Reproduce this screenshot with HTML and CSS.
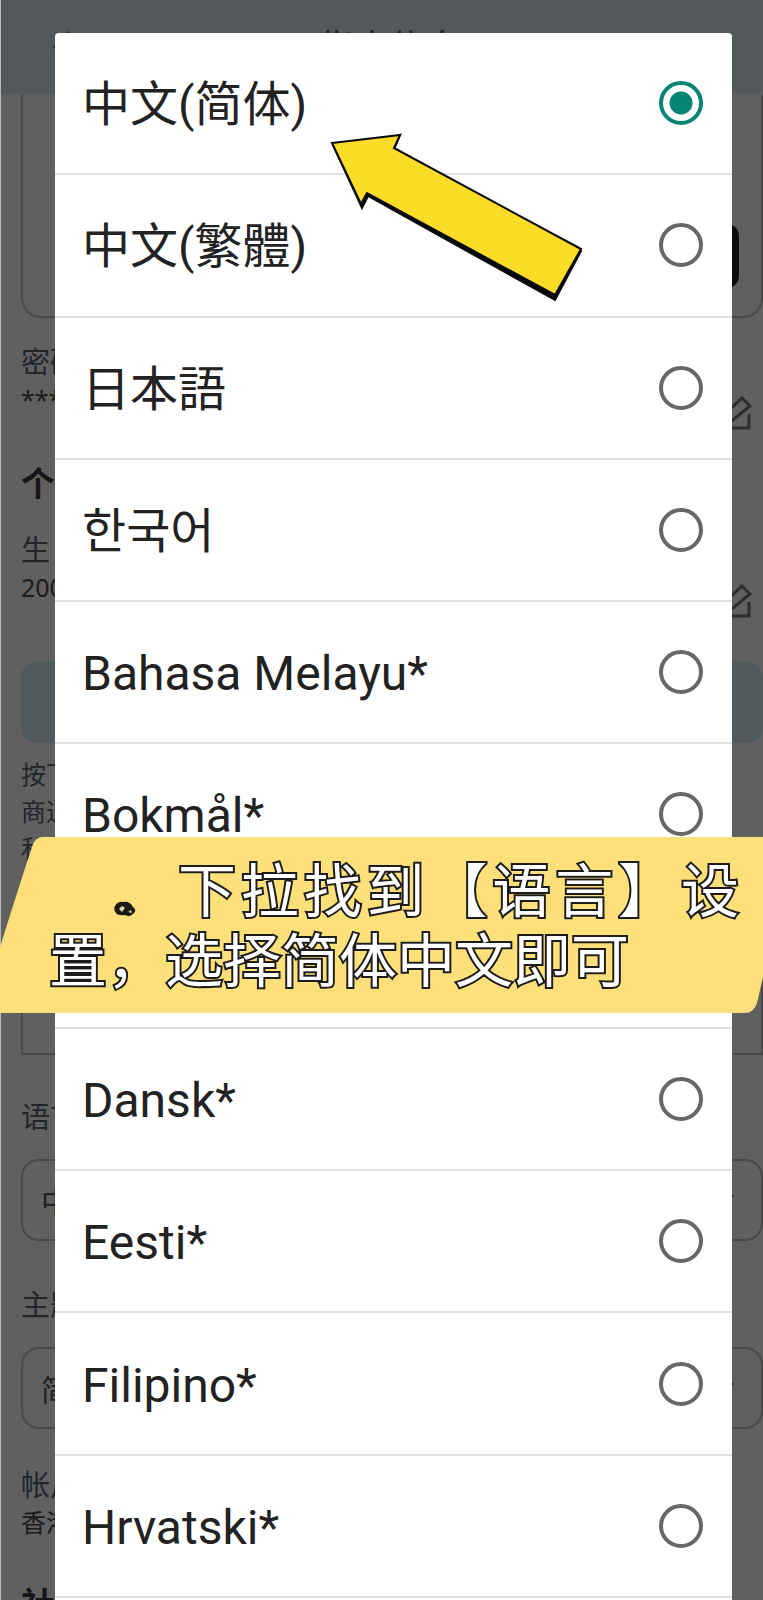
FILE: index.html
```html
<!DOCTYPE html>
<html lang="zh-CN">
<head>
<meta charset="utf-8">
<meta name="viewport" content="width=device-width, initial-scale=1">
<title>语言</title>
<link rel="stylesheet" href="styles.css">
</head>
<body>
<div class="page">
  <header class="topbar">
    <svg class="back" viewBox="0 0 20 36"><path d="M18 3 4 18l14 15"/></svg>
    <h1 class="topbar-title">指定信息</h1>
  </header>
  <main class="settings">
    <section class="card"><span class="card-button"></span></section>
    <section class="field">
      <div><div class="label">密码</div><div class="value">****</div></div>
      <svg class="edit" viewBox="0 0 34 34"><path d="M24 2 32 10 15 24H7v-6zM31 18v14H2V4h12"/></svg>
    </section>
    <h2 class="heading">个</h2>
    <section class="field">
      <div><div class="label">生</div><div class="value">200</div></div>
      <svg class="edit" viewBox="0 0 34 34"><path d="M24 2 32 10 15 24H7v-6zM31 18v14H2V4h12"/></svg>
    </section>
    <div class="save"></div>
    <p class="note">按下<br>商通<br>私</p>
    <div class="panel"></div>
    <div class="label">语言</div>
    <div class="picker"><span>中</span><svg class="chevron" viewBox="0 0 24 14"><path d="M2 2l10 10L22 2"/></svg></div>
    <div class="label label-theme">主题</div>
    <div class="picker"><span>简</span><svg class="chevron" viewBox="0 0 24 14"><path d="M2 2l10 10L22 2"/></svg></div>
    <div class="label label-account">帐户</div>
    <div class="value">香港</div>
    <h2 class="heading heading-last">社</h2>
  </main>
</div>

<form class="dialog">
  <label class="option"><span>中文(简体)</span><input type="radio" name="lang" checked></label>
  <label class="option trad"><span lang="zh-TW">中文(繁體)</span><input type="radio" name="lang"></label>
  <label class="option"><span lang="ja">日本語</span><input type="radio" name="lang"></label>
  <label class="option"><span lang="ko">한국어</span><input type="radio" name="lang"></label>
  <label class="option"><span>Bahasa Melayu*</span><input type="radio" name="lang"></label>
  <label class="option"><span>Bokmål*</span><input type="radio" name="lang"></label>
  <div class="option"></div>
  <label class="option"><span>Dansk*</span><input type="radio" name="lang"></label>
  <label class="option"><span>Eesti*</span><input type="radio" name="lang"></label>
  <label class="option"><span>Filipino*</span><input type="radio" name="lang"></label>
  <label class="option"><span>Hrvatski*</span><input type="radio" name="lang"></label>
</form>

<svg class="arrow" viewBox="0 0 256 172">
  <path class="arrow-shade" d="M4 15 33 78 39 66 226 170 252 121 248 117 224 165 37 61zM71 5 66 17 62 15 67 6z"/>
  <path class="arrow-body" d="M3 13 71 5 65 18 252 119 226 165 38 63 32 74z"/>
</svg>

<aside class="banner">
  <svg class="banner-bg" viewBox="0 0 763 176" preserveAspectRatio="none">
    <path d="M42 0H763V140L757 166Q754 176 744 176H0V110Q22 40 32 10 35 0 42 0z"/>
  </svg>
  <svg class="speck" viewBox="0 0 24 18"><path d="M2 6Q5 1 10 2 17 1 20 7 24 10 21 13 17 18 12 15 5 16 3 13 0 9 2 6z"/><path class="speck-light" d="M6 9Q9 4 12 8L9 12zM15 12l3-2 1 3z"/></svg>
  <p class="banner-text first">下拉找到【语言】设</p>
  <p class="banner-text">置，选择简体中文即可</p>
</aside>
</body>
</html>
```
FILE: styles.css
```css
* { box-sizing: border-box; }

body {
  margin: 0;
  position: relative;
  min-height: 100vh;
  overflow-x: hidden;
  background: #606060;
  color: #222;
  font-family: Roboto, "Noto Sans CJK SC", sans-serif;
}

h1, h2, p { margin: 0; }

.page {
  height: 100vh;
  overflow: hidden;
  border-left: 1px solid #b4b8b8;
}

.topbar {
  display: flex;
  align-items: center;
  height: 94px;
  padding: 0 34px 0 50px;
  background: #53585a;
}

.topbar-title {
  flex: 1;
  padding-top: 4px;
  padding-right: 20px;
  font-size: 35px;
  font-weight: 400;
  line-height: 40px;
  text-align: center;
}

.back { width: 20px; height: 36px; }

.back path, .edit path, .chevron path {
  fill: none;
  stroke: #2c2f30;
  stroke-width: 3;
}

.settings { padding: 0 0 0 20px; }

.card {
  display: flex;
  justify-content: flex-end;
  align-items: flex-end;
  height: 224px;
  padding: 0 22px 28px 0;
  border: 2px solid #4a4a4a;
  border-top: 0;
  border-radius: 0 0 20px 20px;
}

.card-button {
  width: 120px;
  height: 64px;
  border-radius: 12px;
  background: #0b0e0f;
}

.field {
  display: flex;
  justify-content: space-between;
  align-items: flex-end;
  height: 92px;
  margin-top: 26px;
  padding-right: 11px;
}

.field > div { align-self: flex-start; }

.label {
  font-size: 29px;
  line-height: 38px;
  color: #22262b;
}

.value {
  font-family: "Noto Sans", "Noto Sans CJK SC", sans-serif;
  font-size: 25px;
  line-height: 34px;
  color: #1b1b1b;
}

.edit { width: 34px; height: 34px; margin-bottom: 6px; }

.heading {
  margin-top: 26px;
  font-size: 34px;
  line-height: 44px;
  color: #161616;
}

.save {
  height: 82px;
  margin-top: 37px;
  border-radius: 16px;
  background: #535a5e;
}

.note {
  margin-top: 14px;
  font-size: 25px;
  line-height: 37px;
  color: #22262b;
}

.panel {
  height: 120px;
  margin: 67px 0 44px;
  border: 2px solid #4a4a4a;
}

.picker {
  display: flex;
  align-items: center;
  justify-content: space-between;
  height: 82px;
  margin-top: 22px;
  padding: 0 26px 0 18px;
  border: 2px solid #4a4a4a;
  border-radius: 18px;
  font-size: 30px;
}

.chevron { width: 24px; height: 14px; }

.label-theme { margin-top: 46px; }
.label-account { margin-top: 38px; }
.heading-last { margin-top: 44px; }

.dialog {
  position: absolute;
  inset: 33px 31px 0 55px;
  display: grid;
  grid-auto-rows: 1fr;
  padding-bottom: 2px;
  border-radius: 4px 4px 0 0;
  background: #fff;
}

.option {
  display: flex;
  align-items: center;
  justify-content: space-between;
  padding: 0 29px 0 27px;
  border-bottom: 2px solid #e0e0e0;
  font-size: 48px;
  line-height: 56px;
}

.option span { padding-top: 4px; }

.trad { font-family: Roboto, "Noto Sans CJK TC", sans-serif; }

.option input {
  appearance: none;
  width: 44px;
  height: 44px;
  margin: 0;
  border: 4px solid #676767;
  border-radius: 50%;
}

.option input:checked {
  border-color: #078574;
  background: radial-gradient(circle, #078574 11px, transparent 12px);
}

.arrow {
  position: absolute;
  top: 130px;
  left: 329px;
  width: 256px;
  height: 172px;
}

.arrow-shade { fill: #0a0a0a; stroke: #0a0a0a; stroke-width: 2; }
.arrow-body { fill: #fbdc27; stroke: #0a0a0a; stroke-width: 2; }

.banner {
  position: absolute;
  top: 837px;
  left: 0;
  right: 0;
  height: 176px;
  padding: 15px 24px 0 49px;
}

.banner-bg {
  position: absolute;
  inset: 0;
  width: 100%;
  height: 100%;
  fill: #fee07a;
}

.speck {
  position: absolute;
  top: 63px;
  left: 113px;
  width: 24px;
  height: 18px;
  fill: #1c1a10;
}

.speck-light { fill: #d8d0a0; }

.banner-text {
  position: relative;
  color: #fff;
  font-family: "Noto Sans CJK SC", sans-serif;
  font-size: 58px;
  font-weight: 400;
  line-height: 70px;
  -webkit-text-stroke: 4px #1c1c1c;
  paint-order: stroke fill;
}

.first {
  padding-left: 129px;
  text-align-last: justify;
  text-spacing-trim: space-all;
}
```
